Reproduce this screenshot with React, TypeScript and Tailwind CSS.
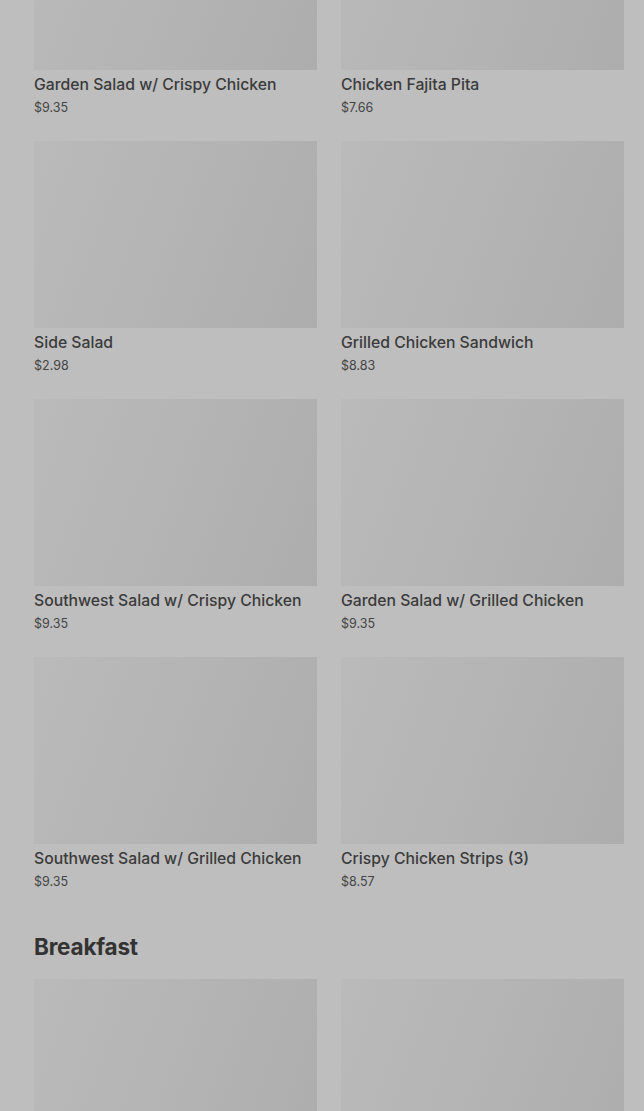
import React from "react";

type Item = { name: string; price: string };

const rows: Item[][] = [
  [
    { name: "Garden Salad w/ Crispy Chicken", price: "$9.35" },
    { name: "Chicken Fajita Pita", price: "$7.66" },
  ],
  [
    { name: "Side Salad", price: "$2.98" },
    { name: "Grilled Chicken Sandwich", price: "$8.83" },
  ],
  [
    { name: "Southwest Salad w/ Crispy Chicken", price: "$9.35" },
    { name: "Garden Salad w/ Grilled Chicken", price: "$9.35" },
  ],
  [
    { name: "Southwest Salad w/ Grilled Chicken", price: "$9.35" },
    { name: "Crispy Chicken Strips (3)", price: "$8.57" },
  ],
];

function Card({ item }: { item?: Item }) {
  return (
    <div className="flex flex-col">
      <div className="h-[187px] w-full bg-[linear-gradient(110deg,#bababa_0%,#b4b4b4_50%,#adadad_100%)]" />
      {item && (
        <>
          <div className="mt-[3px] text-[15.75px] leading-[24px] font-medium text-[#3b3b3b]">
            {item.name}
          </div>
          <div className="mt-[1px] text-[12.5px] leading-[20px] text-[#444444]">
            {item.price}
          </div>
        </>
      )}
    </div>
  );
}

export default function App() {
  return (
    <div
      className="w-[644px] h-[1111px] overflow-hidden bg-[#bebebe]"
      style={{ fontFamily: "Inter, 'Noto Sans', sans-serif" }}
    >
      <div className="pl-[34px] pr-[20px] mt-[-117px] flex flex-col gap-[23px]">
        {rows.map((r, i) => (
          <div key={i} className="grid grid-cols-2 gap-x-[24px]">
            <Card item={r[0]} />
            <Card item={r[1]} />
          </div>
        ))}
      </div>
      <div className="pl-[34px] pr-[20px] mt-[40px]">
        <h2 className="text-[22.5px] leading-[30px] font-bold text-[#333333] tracking-[-0.2px]">
          Breakfast
        </h2>
        <div className="mt-[17px] grid grid-cols-2 gap-x-[24px]">
          <Card />
          <Card />
        </div>
      </div>
    </div>
  );
}
